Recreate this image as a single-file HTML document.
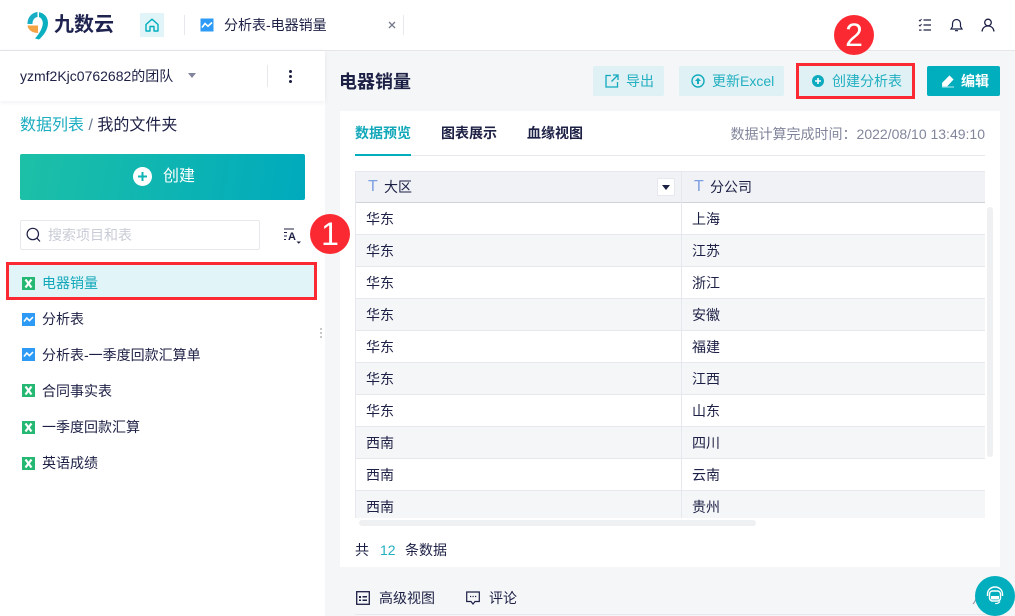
<!DOCTYPE html>
<html lang="zh"><head><meta charset="utf-8"><style>
html,body{margin:0;padding:0}
body{width:1015px;height:616px;overflow:hidden;position:relative;background:#f5f6f8;font-family:"Liberation Sans","Noto Sans CJK SC",sans-serif;font-size:14px;color:#1d2045}
.a{position:absolute}
.t{position:absolute;white-space:nowrap;line-height:20px}
.btn{position:absolute;top:66px;height:30px;background:#dff1f5;border-radius:2px}
.cy{color:#00aebd}
.row{position:absolute;left:355px;width:630px;height:32px;box-sizing:border-box;border-bottom:1px solid #e6e8ee;background:#fff}
.row.g{background:#f5f6f8}
.row span{position:absolute;top:6px;line-height:20px;font-size:14px}
.row span:nth-child(1){left:11px}
.row span:nth-child(2){left:337px}
.row i{position:absolute;left:326px;top:0;bottom:-1px;width:1px;background:#e6e8ee}
svg{position:absolute;overflow:visible}
</style></head><body>

<!-- top bar -->
<div class="a" style="left:0;top:0;width:1015px;height:50px;background:#fff;border-bottom:1px solid #e4e6ea"></div>
<svg style="left:26px;top:11px" width="24" height="30" viewBox="0 0 24 30">
<path d="M1.5 13C1.500 6 6 1.500 11.500 1V6C8.500 6.500 6.500 9 6.500 13Z" fill="#19aec4"/>
<path d="M1.500 14.500H12V22C6.500 22 2 19 1.500 14.500Z" fill="#f5a445"/>
<path d="M13 1.200C18.500 2 22 6.500 22 12C22 19 17 25 13 28.500L9 27.500C12.500 23.500 16 18.500 16.800 13C17 9.500 15.500 7 13 6Z" fill="#0bb0c0"/>
</svg>
<div class="t" style="left:54px;top:12px;font-size:20px;line-height:26px;font-weight:bold;color:#1e2350">九数云</div>
<div class="a" style="left:140px;top:13px;width:24px;height:24px;background:#e1f4f7"></div>
<svg style="left:145px;top:18px" width="14" height="14" viewBox="0 0 14 14"><path d="M1 6.500 7 1.200 13 6.500V13H9V8.500H5V13H1Z" fill="none" stroke="#00aebd" stroke-width="1.400" stroke-linejoin="round"/></svg>
<div class="a" style="left:184px;top:15px;width:1px;height:20px;background:#e6e8ec"></div>
<svg style="left:200px;top:18px" width="14" height="14" viewBox="0 0 14 14"><rect x="0.500" y="0.500" width="13" height="13" fill="#2d9bf5"/><path d="M2 9.500 5 5.500 8 8.200 12 4.500" fill="none" stroke="#fff" stroke-width="1.600"/></svg>
<div class="t" style="left:224px;top:15px;font-size:14px">分析表-电器销量</div>
<svg style="left:388px;top:21px" width="8" height="8" viewBox="0 0 8 8"><path d="M1 1 7 7M7 1 1 7" stroke="#767a90" stroke-width="1.300"/></svg>
<div class="a" style="left:403px;top:15px;width:1px;height:20px;background:#e6e8ec"></div>
<svg style="left:918px;top:18px" width="14" height="14" viewBox="0 0 14 14"><path d="M5.500 2H13M5.500 7H13M5.500 12H13" stroke="#1d2045" stroke-width="1.300"/><path d="M1 2 2 3 3.500 1M1 7 2 8 3.500 6" stroke="#1d2045" stroke-width="1" fill="none"/><path d="M1 11.500H3.500V12.700H1Z" fill="#1d2045"/></svg>
<svg style="left:950px;top:18px" width="13" height="14" viewBox="0 0 13 14"><path d="M1 11H12L10.500 8.500V5.500A4 4 0 0 0 2.500 5.500V8.500Z M5 12.700H8" fill="none" stroke="#1d2045" stroke-width="1.200"/></svg>
<svg style="left:981px;top:18px" width="14" height="14" viewBox="0 0 14 14"><circle cx="7" cy="4.500" r="3.300" fill="none" stroke="#1d2045" stroke-width="1.300"/><path d="M1 13.500C1.500 9.800 4 8 7 8S12.500 9.800 13 13.500" fill="none" stroke="#1d2045" stroke-width="1.300"/></svg>

<!-- sidebar -->
<div class="a" style="left:0;top:51px;width:325px;height:565px;background:#fff"></div>
<div class="a" style="left:0;top:51px;width:325px;height:50px;background:#fff;box-shadow:0 1px 5px rgba(30,35,80,.07)"></div>
<div class="t" style="left:20px;top:66px;font-size:14px">yzmf2Kjc0762682的团队</div>
<div class="a" style="left:188px;top:73px;width:0;height:0;border-left:4px solid transparent;border-right:4px solid transparent;border-top:5px solid #82869c"></div>
<div class="a" style="left:267px;top:65px;width:1px;height:22px;background:#e6e8ec"></div>
<div class="a" style="left:289px;top:70px;width:3px;height:3px;border-radius:2px;background:#1d2045;box-shadow:0 5px 0 #1d2045,0 10px 0 #1d2045"></div>
<div class="t" style="left:20px;top:115px;font-size:16px;line-height:22px"><span style="color:#1cacc0">数据列表</span> <span style="color:#6a7a90">/</span> 我的文件夹</div>

<div class="a" style="left:20px;top:154px;width:285px;height:46px;border-radius:2px;background:linear-gradient(100deg,#1dc0a6,#00aabd)"></div>
<div class="a" style="left:133px;top:167px;width:19px;height:19px;border-radius:50%;background:#fff"></div>
<svg style="left:133px;top:167px" width="19" height="19" viewBox="0 0 19 19"><path d="M9.500 5V14M5 9.500H14" stroke="#10b4b4" stroke-width="2"/></svg>
<div class="t" style="left:163px;top:167px;font-size:16px;color:#fff">创建</div>

<div class="a" style="left:20px;top:220px;width:240px;height:30px;box-sizing:border-box;border:1px solid #e6e8ec;border-radius:2px;background:#fff"></div>
<svg style="left:26px;top:227px" width="15" height="16" viewBox="0 0 15 16"><circle cx="6.800" cy="7" r="5.700" fill="none" stroke="#1d2045" stroke-width="1.200"/><path d="M11 11.200 14 14.500" stroke="#1d2045" stroke-width="1.200"/></svg>
<div class="t" style="left:48px;top:225px;font-size:14px;color:#c9ccd6">搜索项目和表</div>
<svg style="left:283px;top:228px" width="20" height="16" viewBox="0 0 20 16"><path d="M1 1H11M1 4.500H4M1 8H4M1 11.500H3" stroke="#1d2045" stroke-width="1.100"/><path d="M13.500 13.500H18L15.700 15.800Z" fill="#1d2045"/></svg>
<div class="t" style="left:288px;top:227px;font-size:11px;font-weight:bold">A</div>

<div class="a" style="left:6px;top:262px;width:311px;height:38px;box-sizing:border-box;border:3px solid #fb2a32;background:#e1f5f8"></div>
<div class="t cy" style="left:42px;top:273px;font-size:14px;color:#12a8ba">电器销量</div>
<div class="t" style="left:42px;top:309px">分析表</div>
<div class="t" style="left:42px;top:345px">分析表-一季度回款汇算单</div>
<div class="t" style="left:42px;top:381px">合同事实表</div>
<div class="t" style="left:42px;top:417px">一季度回款汇算</div>
<div class="t" style="left:42px;top:453px">英语成绩</div>

<svg style="left:22px;top:277px" width="13" height="13" viewBox="0 0 13 13"><rect width="13" height="13" fill="#25b872"/><path d="M3.500 2.500 9.500 10.500M9.500 2.500 3.500 10.500" stroke="#fff" stroke-width="2.200"/></svg>
<svg style="left:22px;top:313px" width="13" height="13" viewBox="0 0 13 13"><rect width="13" height="13" fill="#2d9bf5"/><path d="M2 8.500 4.800 5 7.500 7.600 11 4" fill="none" stroke="#fff" stroke-width="1.600"/></svg>
<svg style="left:22px;top:348px" width="13" height="13" viewBox="0 0 13 13"><rect width="13" height="13" fill="#2d9bf5"/><path d="M2 8.500 4.800 5 7.500 7.600 11 4" fill="none" stroke="#fff" stroke-width="1.600"/></svg>
<svg style="left:22px;top:384px" width="13" height="13" viewBox="0 0 13 13"><rect width="13" height="13" fill="#25b872"/><path d="M3.500 2.500 9.500 10.500M9.500 2.500 3.500 10.500" stroke="#fff" stroke-width="2.200"/></svg>
<svg style="left:22px;top:421px" width="13" height="13" viewBox="0 0 13 13"><rect width="13" height="13" fill="#25b872"/><path d="M3.500 2.500 9.500 10.500M9.500 2.500 3.500 10.500" stroke="#fff" stroke-width="2.200"/></svg>
<svg style="left:22px;top:457px" width="13" height="13" viewBox="0 0 13 13"><rect width="13" height="13" fill="#25b872"/><path d="M3.500 2.500 9.500 10.500M9.500 2.500 3.500 10.500" stroke="#fff" stroke-width="2.200"/></svg>
<div class="a" style="left:320px;top:328px;width:2px;height:2px;background:#c8c8c8;box-shadow:0 4px 0 #c8c8c8,0 8px 0 #c8c8c8"></div>

<!-- main header -->
<div class="t" style="left:339px;top:71px;font-size:18px;line-height:22px;font-weight:bold">电器销量</div>
<div class="btn" style="left:593px;width:71px"></div>
<svg style="left:605px;top:74px" width="14" height="14" viewBox="0 0 14 14"><path d="M6 1.500H1V13H12.500V8M8 1H13V6M13 1 6.500 7.500" fill="none" stroke="#12aabc" stroke-width="1.300"/></svg>
<div class="t cy" style="left:626px;top:71px;color:#22afc0">导出</div>
<div class="btn" style="left:679px;width:105px"></div>
<svg style="left:691px;top:74px" width="14" height="14" viewBox="0 0 14 14"><circle cx="7" cy="7" r="6" fill="none" stroke="#12aabc" stroke-width="1.400"/><path d="M4 7 7 3.800 10 7H8V10H6V7Z" fill="#12aabc"/></svg>
<div class="t cy" style="left:712px;top:71px;color:#22afc0">更新Excel</div>
<div class="a" style="left:796px;top:63px;width:119px;height:36px;box-sizing:border-box;border:3px solid #fb2a32;background:#dff1f5"></div>
<div class="a" style="left:812px;top:75px;width:12px;height:12px;border-radius:50%;background:#0dabbd"></div>
<svg style="left:812px;top:75px" width="12" height="12" viewBox="0 0 12 12"><path d="M6 3V9M3 6H9" stroke="#fff" stroke-width="1.600"/></svg>
<div class="t cy" style="left:832px;top:71px;color:#22afc0">创建分析表</div>
<div class="btn" style="left:927px;width:73px;background:#00aebd"></div>
<svg style="left:941px;top:74px" width="14" height="14" viewBox="0 0 14 14"><path d="M1.500 9 8.500 2 12 5.500 6 12H1.500ZM1 13H13" fill="#fff" stroke="#fff" stroke-width=".8"/></svg>
<div class="t" style="left:961px;top:71px;color:#fff;font-weight:bold;font-size:14px">编辑</div>

<!-- panel -->
<div class="a" style="left:340px;top:111px;width:660px;height:456px;background:#fff"></div>
<div class="t cy" style="left:355px;top:123px;font-weight:bold;font-size:14px;color:#12a8ba">数据预览</div>
<div class="t" style="left:441px;top:123px;font-weight:bold;font-size:14px">图表展示</div>
<div class="t" style="left:527px;top:123px;font-weight:bold;font-size:14px">血缘视图</div>
<div class="t" style="right:30px;top:124px;font-size:14px;color:#82869c">数据计算完成时间：2022/08/10 13:49:10</div>
<div class="a" style="left:355px;top:155px;width:630px;height:1px;background:#e6e8ee"></div>
<div class="a" style="left:355px;top:154px;width:56px;height:2px;background:#00aebd"></div>

<!-- table -->
<div class="a" style="left:355px;top:171px;width:630px;height:347px;overflow:hidden">
<div class="a" style="left:0;top:0;width:630px;height:32px;box-sizing:border-box;background:#f0f2f6;border-top:1px solid #e6e8ee;border-bottom:1px solid #d0d2da"></div>
</div>
<div class="a" style="left:355px;top:171px;width:1px;height:347px;background:#e6e8ee;z-index:2"></div>
<div class="a" style="left:681px;top:171px;width:1px;height:32px;background:#e6e8ee"></div>
<div class="t" style="left:368px;top:177px;font-size:16px;color:#7b9fe0">T</div>
<div class="t" style="left:384px;top:177px">大区</div>
<div class="a" style="left:657px;top:178px;width:18px;height:18px;box-sizing:border-box;border:1px solid #e6e8ee;background:#fff"></div>
<div class="a" style="left:662px;top:185px;width:0;height:0;border-left:4px solid transparent;border-right:4px solid transparent;border-top:5px solid #1d2045"></div>
<div class="t" style="left:694px;top:177px;font-size:16px;color:#7b9fe0">T</div>
<div class="t" style="left:710px;top:177px">分公司</div>

<div class="row" style="top:203px"><span>华东</span><span>上海</span><i></i></div>
<div class="row g" style="top:235px"><span>华东</span><span>江苏</span><i></i></div>
<div class="row" style="top:267px"><span>华东</span><span>浙江</span><i></i></div>
<div class="row g" style="top:299px"><span>华东</span><span>安徽</span><i></i></div>
<div class="row" style="top:331px"><span>华东</span><span>福建</span><i></i></div>
<div class="row g" style="top:363px"><span>华东</span><span>江西</span><i></i></div>
<div class="row" style="top:395px"><span>华东</span><span>山东</span><i></i></div>
<div class="row g" style="top:427px"><span>西南</span><span>四川</span><i></i></div>
<div class="row" style="top:459px"><span>西南</span><span>云南</span><i></i></div>
<div class="row g" style="top:491px;height:27px;border:0;overflow:hidden"><span>西南</span><span>贵州</span><i></i></div>

<div class="a" style="left:359px;top:520px;width:397px;height:6px;border-radius:3px;background:#eff0f2"></div>
<div class="a" style="left:987px;top:207px;width:6px;height:250px;border-radius:3px;background:#eff0f2"></div>

<div class="t" style="left:355px;top:540px">共</div>
<div class="t cy" style="left:380px;top:540px;color:#22afc0">12</div>
<div class="t" style="left:405px;top:540px">条数据</div>

<!-- bottom -->
<svg style="left:356px;top:591px" width="14" height="14" viewBox="0 0 14 14"><rect x=".7" y=".7" width="12.600" height="12.600" fill="none" stroke="#1d2045" stroke-width="1.300"/><path d="M3 5H5V7H3ZM6.500 5H11V6.500H6.500ZM3 8.500H5V10H3ZM6.500 8.500H11V10H6.500Z" fill="#1d2045"/></svg>
<div class="t" style="left:379px;top:588px">高级视图</div>
<svg style="left:466px;top:591px" width="14" height="14" viewBox="0 0 14 14"><path d="M.7 1H13.300V10.500H9L7 13 5 10.500H.7Z" fill="none" stroke="#1d2045" stroke-width="1.200"/><path d="M4 5.500H5.200M6.500 5.500H7.700M9 5.500H10.200" stroke="#1d2045" stroke-width="1.200"/></svg>
<div class="t" style="left:489px;top:588px">评论</div>
<div class="a" style="left:355px;top:614px;width:645px;height:1px;background:#e6e8ee"></div>
<svg style="left:972px;top:591px" width="5" height="14" viewBox="0 0 5 14"><path d="M4 1V6C4 9 3 11 1 13" fill="none" stroke="#8a8d9c" stroke-width="1"/></svg>

<div class="a" style="left:975px;top:576px;width:40px;height:40px;border-radius:50%;background:#00aebd"></div>
<svg style="left:985px;top:586px" width="20" height="20" viewBox="0 0 20 20"><path d="M2.500 10V8A7.500 7 0 0 1 17.500 8V10" fill="none" stroke="#fff" stroke-width="1.400"/><rect x="4.500" y="5" width="11" height="10" rx="3" fill="none" stroke="#fff" stroke-width="1.400"/><rect x="6" y="10" width="8" height="3.500" fill="#fff"/><path d="M15 15.500Q13 18 10 17.500" fill="none" stroke="#fff" stroke-width="1.200"/></svg>

<!-- red badges -->
<div class="a" style="left:310px;top:214px;width:40px;height:40px;border-radius:50%;background:#fb2a32;z-index:5"></div>
<div class="t" style="left:310px;top:214px;width:40px;text-align:center;font-size:32px;line-height:40px;color:#fff;z-index:6">1</div>
<div class="a" style="left:834px;top:15px;width:40px;height:40px;border-radius:50%;background:#fb2a32;z-index:5"></div>
<div class="t" style="left:834px;top:15px;width:40px;text-align:center;font-size:32px;line-height:40px;color:#fff;z-index:6">2</div>
</body></html>
